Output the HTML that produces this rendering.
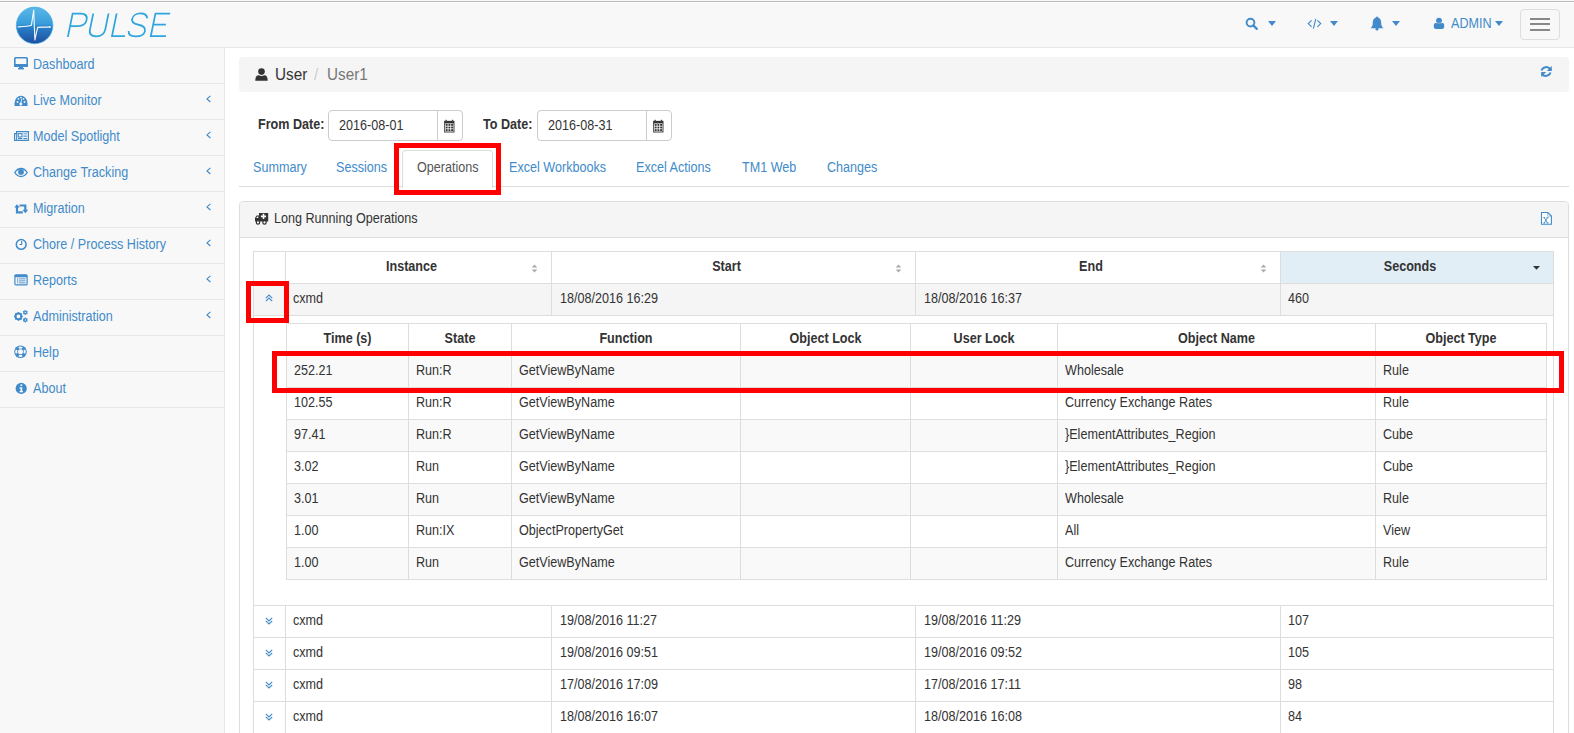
<!DOCTYPE html><html><head><meta charset="utf-8"><style>
html,body{margin:0;padding:0;width:1574px;height:733px;overflow:hidden;background:#fff;font-family:'Liberation Sans', sans-serif;}
.t{position:absolute;line-height:20px;white-space:nowrap;font-family:'Liberation Sans', sans-serif;transform:scaleY(1.1);transform-origin:0 14px;}
</style></head><body>
<div style="position:absolute;left:0px;top:0px;width:1574px;height:47px;background:#f8f8f8"></div>
<div style="position:absolute;left:0px;top:1px;width:1574px;height:1px;background:#bdbdbd"></div>
<div style="position:absolute;left:0px;top:2px;width:1574px;height:1px;background:#fcfcfc"></div>
<div style="position:absolute;left:0px;top:47px;width:1574px;height:1px;background:#e7e7e7"></div>
<svg style="position:absolute;left:14px;top:4px" width="42" height="42" viewBox="0 0 42 42">
<defs><linearGradient id="lg" x1="0" y1="0" x2="0" y2="1">
<stop offset="0" stop-color="#5ab8e8"/><stop offset="0.45" stop-color="#3a9edb"/><stop offset="0.55" stop-color="#2a7fc8"/><stop offset="1" stop-color="#1f4ea0"/></linearGradient></defs>
<circle cx="20.6" cy="21.4" r="18.3" fill="url(#lg)" stroke="#3fb0e6" stroke-width="0.7"/>
<path d="M3.7,22.9 C9,22.7 14.5,22.6 17.4,21.3 L19.7,6 L20.9,35.9 L23.6,23.4 C27,23.1 31,23.2 35.8,22.9" fill="none" stroke="#fff" stroke-width="1.1" stroke-linejoin="round" opacity="0.95"/><circle cx="35.9" cy="22.9" r="0.9" fill="#fff"/>
</svg>
<svg style="position:absolute;left:60px;top:5px" width="120" height="40" viewBox="0 0 120 40">
<g transform="matrix(1,0,-0.205,1,6.385,0) translate(-60,-5)" fill="none" stroke="#2ea5de" stroke-width="1.75" stroke-linecap="butt">
<path d="M68,37 V13.5 H76 C81,13.5 83.3,16.3 83.3,20 C83.3,23.7 81,26 76,26 H68"/>
<path d="M88.6,13.5 V29.5 C88.6,34 91.5,36.3 96.2,36.3 C101,36.3 103.9,34 103.9,29.5 V13.5"/>
<path d="M112,13.5 V36.2 H125"/>
<path d="M143.6,18.3 C142.5,15 139.5,13.4 135.7,13.4 C131.5,13.4 128.6,15.5 128.6,19 C128.6,22.5 131.5,23.8 135.7,24.6 C140.3,25.5 143.9,27 143.9,31 C143.9,34.5 140.5,36.4 135.7,36.4 C131,36.4 128,34.3 127.6,31"/>
<path d="M165.5,13.5 H150.8 V36.2 H166 M150.8,24.6 H163.5"/>
</g></svg>
<svg style="position:absolute;left:1245px;top:17px" width="14" height="14" viewBox="0 0 14 14"><circle cx="5.5" cy="5.6" r="3.9" fill="none" stroke="#428bca" stroke-width="1.9"/><path d="M8.3,8.4 L11.8,11.9" stroke="#428bca" stroke-width="2.2" stroke-linecap="round"/></svg>
<svg style="position:absolute;left:1268px;top:21px" width="8" height="5" viewBox="0 0 8 5"><path d="M0,0 H8 L4,5 Z" fill="#428bca"/></svg>
<svg style="position:absolute;left:1307px;top:18px" width="15" height="12" viewBox="0 0 15 12"><path d="M4.6,2.4 L1.3,5.6 L4.6,8.8 M10.4,2.4 L13.7,5.6 L10.4,8.8 M8.8,0.9 L6.4,10.6" fill="none" stroke="#428bca" stroke-width="1.15"/></svg>
<svg style="position:absolute;left:1330px;top:21px" width="8" height="5" viewBox="0 0 8 5"><path d="M0,0 H8 L4,5 Z" fill="#428bca"/></svg>
<svg style="position:absolute;left:1370px;top:16px" width="14" height="15" viewBox="0 0 14 15"><path d="M7,1.5 C3.8,1.5 2.8,4 2.8,7 C2.8,9.5 2,11 0.5,12.3 H13.5 C12,11 11.2,9.5 11.2,7 C11.2,4 10.2,1.5 7,1.5 Z" fill="#428bca"/><circle cx="7" cy="13" r="1.6" fill="#428bca"/><circle cx="7" cy="1.4" r="1" fill="#428bca"/></svg>
<svg style="position:absolute;left:1392px;top:21px" width="8" height="5" viewBox="0 0 8 5"><path d="M0,0 H8 L4,5 Z" fill="#428bca"/></svg>
<svg style="position:absolute;left:1433px;top:17px" width="12" height="13" viewBox="0 0 12 13"><circle cx="6" cy="3.6" r="2.9" fill="#428bca"/><rect x="0.8" y="6.1" width="10.4" height="5.8" rx="1.8" fill="#428bca"/><path d="M3.6,6.1 H8.4" stroke="#f8f8f8" stroke-width="0.6" opacity="0.6"/></svg>
<div class="t" style="left:1451px;top:14px;font-size:12.6px;color:#428bca;font-weight:normal;">ADMIN</div>
<svg style="position:absolute;left:1495px;top:21px" width="8" height="5" viewBox="0 0 8 5"><path d="M0,0 H8 L4,5 Z" fill="#428bca"/></svg>
<div style="position:absolute;left:1520px;top:9px;width:38px;height:29px;border:1px solid #ddd;border-radius:4px"></div>
<div style="position:absolute;left:1530px;top:18px;width:20px;height:2px;background:#888"></div>
<div style="position:absolute;left:1530px;top:23px;width:20px;height:2px;background:#888"></div>
<div style="position:absolute;left:1530px;top:29px;width:20px;height:2px;background:#888"></div>
<div style="position:absolute;left:0px;top:48px;width:224px;height:685px;background:#f8f8f8"></div>
<div style="position:absolute;left:224px;top:48px;width:1px;height:685px;background:#e7e7e7"></div>
<div style="position:absolute;left:0px;top:83px;width:224px;height:1px;background:#e7e7e7"></div>
<div class="t" style="left:33px;top:55px;font-size:12.6px;color:#428bca;font-weight:normal;">Dashboard</div>
<div style="position:absolute;left:0px;top:119px;width:224px;height:1px;background:#e7e7e7"></div>
<div class="t" style="left:33px;top:91px;font-size:12.6px;color:#428bca;font-weight:normal;">Live Monitor</div>
<svg style="position:absolute;left:205px;top:95px" width="7" height="8" viewBox="0 0 7 8"><path d="M5.4,0.8 L2,3.9 L5.4,7" fill="none" stroke="#428bca" stroke-width="1.15"/></svg>
<div style="position:absolute;left:0px;top:155px;width:224px;height:1px;background:#e7e7e7"></div>
<div class="t" style="left:33px;top:127px;font-size:12.6px;color:#428bca;font-weight:normal;">Model Spotlight</div>
<svg style="position:absolute;left:205px;top:131px" width="7" height="8" viewBox="0 0 7 8"><path d="M5.4,0.8 L2,3.9 L5.4,7" fill="none" stroke="#428bca" stroke-width="1.15"/></svg>
<div style="position:absolute;left:0px;top:191px;width:224px;height:1px;background:#e7e7e7"></div>
<div class="t" style="left:33px;top:163px;font-size:12.6px;color:#428bca;font-weight:normal;">Change Tracking</div>
<svg style="position:absolute;left:205px;top:167px" width="7" height="8" viewBox="0 0 7 8"><path d="M5.4,0.8 L2,3.9 L5.4,7" fill="none" stroke="#428bca" stroke-width="1.15"/></svg>
<div style="position:absolute;left:0px;top:227px;width:224px;height:1px;background:#e7e7e7"></div>
<div class="t" style="left:33px;top:199px;font-size:12.6px;color:#428bca;font-weight:normal;">Migration</div>
<svg style="position:absolute;left:205px;top:203px" width="7" height="8" viewBox="0 0 7 8"><path d="M5.4,0.8 L2,3.9 L5.4,7" fill="none" stroke="#428bca" stroke-width="1.15"/></svg>
<div style="position:absolute;left:0px;top:263px;width:224px;height:1px;background:#e7e7e7"></div>
<div class="t" style="left:33px;top:235px;font-size:12.6px;color:#428bca;font-weight:normal;">Chore / Process History</div>
<svg style="position:absolute;left:205px;top:239px" width="7" height="8" viewBox="0 0 7 8"><path d="M5.4,0.8 L2,3.9 L5.4,7" fill="none" stroke="#428bca" stroke-width="1.15"/></svg>
<div style="position:absolute;left:0px;top:299px;width:224px;height:1px;background:#e7e7e7"></div>
<div class="t" style="left:33px;top:271px;font-size:12.6px;color:#428bca;font-weight:normal;">Reports</div>
<svg style="position:absolute;left:205px;top:275px" width="7" height="8" viewBox="0 0 7 8"><path d="M5.4,0.8 L2,3.9 L5.4,7" fill="none" stroke="#428bca" stroke-width="1.15"/></svg>
<div style="position:absolute;left:0px;top:335px;width:224px;height:1px;background:#e7e7e7"></div>
<div class="t" style="left:33px;top:307px;font-size:12.6px;color:#428bca;font-weight:normal;">Administration</div>
<svg style="position:absolute;left:205px;top:311px" width="7" height="8" viewBox="0 0 7 8"><path d="M5.4,0.8 L2,3.9 L5.4,7" fill="none" stroke="#428bca" stroke-width="1.15"/></svg>
<div style="position:absolute;left:0px;top:371px;width:224px;height:1px;background:#e7e7e7"></div>
<div class="t" style="left:33px;top:343px;font-size:12.6px;color:#428bca;font-weight:normal;">Help</div>
<div style="position:absolute;left:0px;top:407px;width:224px;height:1px;background:#e7e7e7"></div>
<div class="t" style="left:33px;top:379px;font-size:12.6px;color:#428bca;font-weight:normal;">About</div>
<svg style="position:absolute;left:14px;top:57px" width="14" height="13" viewBox="0 0 14 13"><rect x="0.8" y="0.8" width="12.4" height="8.4" rx="0.8" fill="none" stroke="#428bca" stroke-width="1.6"/><rect x="0" y="7" width="14" height="2.8" fill="#428bca"/><rect x="5" y="9.5" width="4" height="1.8" fill="#428bca"/><rect x="4" y="11" width="6" height="1.4" fill="#428bca"/></svg>
<svg style="position:absolute;left:14px;top:95px" width="14" height="12" viewBox="0 0 14 12"><path d="M0.5,11 C0.2,4.5 3,0.8 7,0.8 C11,0.8 13.8,4.5 13.5,11 Z" fill="#428bca"/><g fill="#f8f8f8"><circle cx="3.5" cy="7" r="0.9"/><circle cx="4.5" cy="3.8" r="0.9"/><circle cx="7" cy="2.6" r="0.9"/><circle cx="9.5" cy="3.8" r="0.9"/><circle cx="10.5" cy="7" r="0.9"/><circle cx="6.8" cy="9" r="1.5"/></g><path d="M6.8,9 L7.6,4" stroke="#f8f8f8" stroke-width="0.8"/></svg>
<svg style="position:absolute;left:13px;top:130px" width="17" height="12" viewBox="0 0 17 12"><path d="M3.6,1.6 H15.4 V10.4 H1.6 V3.6 H3.6 Z" fill="none" stroke="#428bca" stroke-width="1.2"/><path d="M3.6,3 V10" stroke="#428bca" stroke-width="1"/><rect x="5.2" y="3.6" width="3.8" height="3.4" fill="none" stroke="#428bca" stroke-width="1.1"/><rect x="10.4" y="3.2" width="3.6" height="1.1" fill="#428bca" opacity="0.75"/><rect x="10.4" y="5.6" width="3.6" height="1.1" fill="#428bca"/><rect x="5" y="8" width="4.2" height="1.1" fill="#428bca"/><rect x="10.4" y="8" width="3.6" height="1.1" fill="#428bca"/></svg>
<svg style="position:absolute;left:14px;top:167px" width="14" height="11" viewBox="0 0 14 11"><path d="M0.8,5.5 C3,2 5,1.5 7,1.5 C9,1.5 11,2 13.2,5.5 C11,9 9,9.5 7,9.5 C5,9.5 3,9 0.8,5.5 Z" fill="none" stroke="#428bca" stroke-width="1.3"/><circle cx="7" cy="4.9" r="2.9" fill="#428bca"/></svg>
<svg style="position:absolute;left:14px;top:204px" width="15" height="10" viewBox="0 0 15 10"><path d="M0.2,3.6 L3,0.3 L5.8,3.6 Z" fill="#428bca"/><path d="M3,3 V8.4 H8.8" fill="none" stroke="#428bca" stroke-width="2.2"/><path d="M5.5,1.5 H11.3 V6.5" fill="none" stroke="#428bca" stroke-width="2.2"/><path d="M8.4,5.8 L11.3,9.2 L14.2,5.8 Z" fill="#428bca"/></svg>
<svg style="position:absolute;left:15px;top:238px" width="13" height="13" viewBox="0 0 13 13"><circle cx="6.2" cy="6.4" r="4.9" fill="none" stroke="#428bca" stroke-width="1.5"/><path d="M6.7,3 V6.5 H4.5" fill="none" stroke="#428bca" stroke-width="1.1"/></svg>
<svg style="position:absolute;left:14px;top:274px" width="14" height="12" viewBox="0 0 14 12"><rect x="0.9" y="0.9" width="12.2" height="10" rx="1" fill="none" stroke="#428bca" stroke-width="1.2"/><rect x="0.9" y="0.9" width="12.2" height="2.4" fill="#428bca"/><g fill="#428bca" opacity="0.8"><rect x="3.2" y="4.2" width="1" height="5.2"/><rect x="5" y="4.3" width="6.5" height="1.1"/><rect x="5" y="6.3" width="6.5" height="1.1"/><rect x="5" y="8.3" width="6.5" height="1.1"/></g></svg>
<svg style="position:absolute;left:13px;top:309px" width="16" height="15" viewBox="0 0 16 15"><g fill="#428bca"><rect x="4.65" y="3.1000000000000005" width="1.5" height="2.3" transform="rotate(0.0 5.4 7.4)"/><rect x="4.65" y="3.1000000000000005" width="1.5" height="2.3" transform="rotate(45.0 5.4 7.4)"/><rect x="4.65" y="3.1000000000000005" width="1.5" height="2.3" transform="rotate(90.0 5.4 7.4)"/><rect x="4.65" y="3.1000000000000005" width="1.5" height="2.3" transform="rotate(135.0 5.4 7.4)"/><rect x="4.65" y="3.1000000000000005" width="1.5" height="2.3" transform="rotate(180.0 5.4 7.4)"/><rect x="4.65" y="3.1000000000000005" width="1.5" height="2.3" transform="rotate(225.0 5.4 7.4)"/><rect x="4.65" y="3.1000000000000005" width="1.5" height="2.3" transform="rotate(270.0 5.4 7.4)"/><rect x="4.65" y="3.1000000000000005" width="1.5" height="2.3" transform="rotate(315.0 5.4 7.4)"/></g><circle cx="5.4" cy="7.4" r="3.0" fill="none" stroke="#428bca" stroke-width="1.8599999999999999"/><g fill="#428bca"><rect x="11.8" y="0.9999999999999999" width="1.0" height="1.9" transform="rotate(0.0 12.3 3.5)"/><rect x="11.8" y="0.9999999999999999" width="1.0" height="1.9" transform="rotate(60.0 12.3 3.5)"/><rect x="11.8" y="0.9999999999999999" width="1.0" height="1.9" transform="rotate(120.0 12.3 3.5)"/><rect x="11.8" y="0.9999999999999999" width="1.0" height="1.9" transform="rotate(180.0 12.3 3.5)"/><rect x="11.8" y="0.9999999999999999" width="1.0" height="1.9" transform="rotate(240.0 12.3 3.5)"/><rect x="11.8" y="0.9999999999999999" width="1.0" height="1.9" transform="rotate(300.0 12.3 3.5)"/></g><circle cx="12.3" cy="3.5" r="1.6" fill="none" stroke="#428bca" stroke-width="0.992"/><g fill="#428bca"><rect x="11.8" y="8.5" width="1.0" height="1.9" transform="rotate(0.0 12.3 11.0)"/><rect x="11.8" y="8.5" width="1.0" height="1.9" transform="rotate(60.0 12.3 11.0)"/><rect x="11.8" y="8.5" width="1.0" height="1.9" transform="rotate(120.0 12.3 11.0)"/><rect x="11.8" y="8.5" width="1.0" height="1.9" transform="rotate(180.0 12.3 11.0)"/><rect x="11.8" y="8.5" width="1.0" height="1.9" transform="rotate(240.0 12.3 11.0)"/><rect x="11.8" y="8.5" width="1.0" height="1.9" transform="rotate(300.0 12.3 11.0)"/></g><circle cx="12.3" cy="11.0" r="1.6" fill="none" stroke="#428bca" stroke-width="0.992"/></svg>
<svg style="position:absolute;left:14px;top:345px" width="14" height="14" viewBox="0 0 14 14"><circle cx="6.5" cy="6.7" r="6.3" fill="#428bca"/><path d="M11.25,4.58 A5.2,5.2 0 0 1 11.25,8.82 L9.51,8.04 A3.3,3.3 0 0 0 9.51,5.36 Z M8.62,11.45 A5.2,5.2 0 0 1 4.38,11.45 L5.16,9.71 A3.3,3.3 0 0 0 7.84,9.71 Z M1.75,8.82 A5.2,5.2 0 0 1 1.75,4.58 L3.49,5.36 A3.3,3.3 0 0 0 3.49,8.04 Z M4.38,1.95 A5.2,5.2 0 0 1 8.62,1.95 L7.84,3.69 A3.3,3.3 0 0 0 5.16,3.69 Z" fill="#f8f8f8"/><circle cx="6.5" cy="6.7" r="2.5" fill="#f8f8f8"/></svg>
<svg style="position:absolute;left:15px;top:382px" width="13" height="13" viewBox="0 0 13 13"><circle cx="6.2" cy="6.4" r="5.6" fill="#428bca"/><g fill="#f8f8f8"><rect x="5.5" y="2.4" width="1.7" height="1.6"/><path d="M4.6,5.2 H7.2 V9 H8 V10.2 H4.6 V9 H5.5 V6.4 H4.6 Z"/></g></svg>
<div style="position:absolute;left:239px;top:57px;width:1330px;height:35px;background:#f5f5f5;border-radius:4px"></div>
<svg style="position:absolute;left:255px;top:68px" width="13" height="13" viewBox="0 0 13 13"><circle cx="6.5" cy="3.6" r="3.3" fill="#333"/><path d="M0.3,12.8 C0.3,9 1.5,7.3 3.8,7.3 C5,8.2 8,8.2 9.2,7.3 C11.5,7.3 12.7,9 12.7,12.8 Z" fill="#333"/></svg>
<div class="t" style="left:275px;top:65px;font-size:15.3px;color:#333;font-weight:normal;transform:scaleY(1.05);transform-origin:0 15px">User</div>
<div class="t" style="left:314px;top:65px;font-size:15.3px;color:#ccc;font-weight:normal;transform:scaleY(1.05);transform-origin:0 15px">/</div>
<div class="t" style="left:327px;top:65px;font-size:15.3px;color:#777;font-weight:normal;transform:scaleY(1.05);transform-origin:0 15px">User1</div>
<svg style="position:absolute;left:1540px;top:65px" width="13" height="13" viewBox="0 0 13 13"><path d="M10.3,4.2 A5,5 0 0 0 1.5,5.5" fill="none" stroke="#428bca" stroke-width="2"/><path d="M11.8,1 V6 H6.8 Z" fill="#428bca"/><path d="M1.7,7.8 A5,5 0 0 0 10.5,6.5" fill="none" stroke="#428bca" stroke-width="2" transform="translate(0,1)"/><path d="M1.2,12 V7 H6.2 Z" fill="#428bca"/></svg>
<div class="t" style="left:258px;top:115px;font-size:12.6px;color:#333;font-weight:bold;">From Date:</div>
<div style="position:absolute;left:328px;top:110px;width:133px;height:29px;border:1px solid #ccc;border-radius:4px;background:#fff"></div>
<div style="position:absolute;left:437px;top:111px;width:1px;height:29px;background:#ccc"></div>
<div class="t" style="left:339px;top:116px;font-size:12.6px;color:#333;font-weight:normal;">2016-08-01</div>
<svg style="position:absolute;left:443px;top:119px" width="12" height="14" viewBox="0 0 12 14"><rect x="1.6" y="2.4" width="9.4" height="10.6" fill="#fff" stroke="#555" stroke-width="1.1"/><rect x="1.6" y="2" width="9.4" height="2.4" fill="#333"/><rect x="2.4" y="0.8" width="1.4" height="2" fill="#444"/><rect x="8.8" y="0.8" width="1.4" height="2" fill="#444"/><g fill="#333"><rect x="2.75" y="5.0" width="1.9" height="1.8"/><rect x="2.75" y="7.6" width="1.9" height="1.8"/><rect x="2.75" y="10.2" width="1.9" height="1.8"/><rect x="5.45" y="5.0" width="1.9" height="1.8"/><rect x="5.45" y="7.6" width="1.9" height="1.8"/><rect x="5.45" y="10.2" width="1.9" height="1.8"/><rect x="8.15" y="5.0" width="1.9" height="1.8"/><rect x="8.15" y="7.6" width="1.9" height="1.8"/><rect x="8.15" y="10.2" width="1.9" height="1.8"/></g></svg>
<div class="t" style="left:483px;top:115px;font-size:12.6px;color:#333;font-weight:bold;">To Date:</div>
<div style="position:absolute;left:537px;top:110px;width:133px;height:29px;border:1px solid #ccc;border-radius:4px;background:#fff"></div>
<div style="position:absolute;left:646px;top:111px;width:1px;height:29px;background:#ccc"></div>
<div class="t" style="left:548px;top:116px;font-size:12.6px;color:#333;font-weight:normal;">2016-08-31</div>
<svg style="position:absolute;left:652px;top:119px" width="12" height="14" viewBox="0 0 12 14"><rect x="1.6" y="2.4" width="9.4" height="10.6" fill="#fff" stroke="#555" stroke-width="1.1"/><rect x="1.6" y="2" width="9.4" height="2.4" fill="#333"/><rect x="2.4" y="0.8" width="1.4" height="2" fill="#444"/><rect x="8.8" y="0.8" width="1.4" height="2" fill="#444"/><g fill="#333"><rect x="2.75" y="5.0" width="1.9" height="1.8"/><rect x="2.75" y="7.6" width="1.9" height="1.8"/><rect x="2.75" y="10.2" width="1.9" height="1.8"/><rect x="5.45" y="5.0" width="1.9" height="1.8"/><rect x="5.45" y="7.6" width="1.9" height="1.8"/><rect x="5.45" y="10.2" width="1.9" height="1.8"/><rect x="8.15" y="5.0" width="1.9" height="1.8"/><rect x="8.15" y="7.6" width="1.9" height="1.8"/><rect x="8.15" y="10.2" width="1.9" height="1.8"/></g></svg>
<div style="position:absolute;left:239px;top:186px;width:1330px;height:1px;background:#ddd"></div>
<div style="position:absolute;left:402px;top:150px;width:89px;height:37px;background:#fff;border:1px solid #ddd;border-bottom:none;border-radius:4px 4px 0 0"></div>
<div class="t" style="left:253px;top:158px;font-size:12.6px;color:#428bca;font-weight:normal;">Summary</div>
<div class="t" style="left:336px;top:158px;font-size:12.6px;color:#428bca;font-weight:normal;">Sessions</div>
<div class="t" style="left:417px;top:158px;font-size:12.6px;color:#555;font-weight:normal;">Operations</div>
<div class="t" style="left:509px;top:158px;font-size:12.6px;color:#428bca;font-weight:normal;">Excel Workbooks</div>
<div class="t" style="left:636px;top:158px;font-size:12.6px;color:#428bca;font-weight:normal;">Excel Actions</div>
<div class="t" style="left:742px;top:158px;font-size:12.6px;color:#428bca;font-weight:normal;">TM1 Web</div>
<div class="t" style="left:827px;top:158px;font-size:12.6px;color:#428bca;font-weight:normal;">Changes</div>
<div style="position:absolute;left:239px;top:201px;width:1328px;height:600px;border:1px solid #ddd;border-radius:4px;background:#fff"></div>
<div style="position:absolute;left:240px;top:202px;width:1328px;height:35px;background:#f5f5f5;border-radius:3px 3px 0 0"></div>
<div style="position:absolute;left:240px;top:237px;width:1328px;height:1px;background:#ddd"></div>
<div class="t" style="left:274px;top:209px;font-size:12.6px;color:#333;font-weight:normal;">Long Running Operations</div>
<svg style="position:absolute;left:254px;top:211px" width="16" height="14" viewBox="0 0 16 14"><path d="M5,1.9 H14.2 V10.6 H1 V7 L2.6,4.4 H5 Z" fill="#333"/><path d="M2.2,7 L3.2,5.4 H4.3 V7 Z" fill="#f5f5f5"/><path d="M8.7,2.8 H10.3 V4.6 H12.1 V6.2 H10.3 V8 H8.7 V6.2 H6.9 V4.6 H8.7 Z" fill="#fff"/><circle cx="4" cy="11.4" r="1.7" fill="#f5f5f5" stroke="#333" stroke-width="1.2"/><circle cx="10.5" cy="11.4" r="1.7" fill="#f5f5f5" stroke="#333" stroke-width="1.2"/></svg>
<svg style="position:absolute;left:1540px;top:211px" width="13" height="15" viewBox="0 0 13 15"><path d="M1.5,1.5 H7.8 L11.4,5.1 V13.2 H1.5 Z" fill="#fff" stroke="#428bca" stroke-width="1.1"/><path d="M7.6,1.8 V5.2 H11.2" fill="none" stroke="#428bca" stroke-width="0.7" opacity="0.7"/><path d="M4.2,6.6 L7.6,12 M7.6,6.6 L4.2,12 M3.3,6.6 H5.2 M6.6,6.6 H8.5 M3.3,12 H5.2 M6.6,12 H8.5" stroke="#428bca" stroke-width="0.9" fill="none"/></svg>
<div style="position:absolute;left:1281px;top:252px;width:272px;height:31px;background:#e2eef6"></div>
<div style="position:absolute;left:254px;top:284px;width:1299px;height:31px;background:#f5f5f5"></div>
<div style="position:absolute;left:253px;top:251px;width:1301px;height:1px;background:#ddd"></div>
<div style="position:absolute;left:253px;top:283px;width:1301px;height:1px;background:#ddd"></div>
<div style="position:absolute;left:253px;top:315px;width:1301px;height:1px;background:#ddd"></div>
<div style="position:absolute;left:253px;top:605px;width:1301px;height:1px;background:#ddd"></div>
<div style="position:absolute;left:253px;top:637px;width:1301px;height:1px;background:#ddd"></div>
<div style="position:absolute;left:253px;top:669px;width:1301px;height:1px;background:#ddd"></div>
<div style="position:absolute;left:253px;top:701px;width:1301px;height:1px;background:#ddd"></div>
<div style="position:absolute;left:253px;top:251px;width:1px;height:65px;background:#ddd"></div>
<div style="position:absolute;left:285px;top:251px;width:1px;height:65px;background:#ddd"></div>
<div style="position:absolute;left:551px;top:251px;width:1px;height:65px;background:#ddd"></div>
<div style="position:absolute;left:915px;top:251px;width:1px;height:65px;background:#ddd"></div>
<div style="position:absolute;left:1280px;top:251px;width:1px;height:65px;background:#ddd"></div>
<div style="position:absolute;left:1553px;top:251px;width:1px;height:65px;background:#ddd"></div>
<div style="position:absolute;left:253px;top:316px;width:1px;height:289px;background:#ddd"></div>
<div style="position:absolute;left:1553px;top:316px;width:1px;height:289px;background:#ddd"></div>
<div style="position:absolute;left:253px;top:605px;width:1px;height:128px;background:#ddd"></div>
<div style="position:absolute;left:285px;top:605px;width:1px;height:128px;background:#ddd"></div>
<div style="position:absolute;left:551px;top:605px;width:1px;height:128px;background:#ddd"></div>
<div style="position:absolute;left:915px;top:605px;width:1px;height:128px;background:#ddd"></div>
<div style="position:absolute;left:1280px;top:605px;width:1px;height:128px;background:#ddd"></div>
<div style="position:absolute;left:1553px;top:605px;width:1px;height:128px;background:#ddd"></div>
<div class="t" style="left:293px;width:237px;text-align:center;top:257px;font-size:12.6px;color:#333;font-weight:bold">Instance</div>
<div class="t" style="left:559px;width:335px;text-align:center;top:257px;font-size:12.6px;color:#333;font-weight:bold">Start</div>
<div class="t" style="left:923px;width:336px;text-align:center;top:257px;font-size:12.6px;color:#333;font-weight:bold">End</div>
<div class="t" style="left:1288px;width:244px;text-align:center;top:257px;font-size:12.6px;color:#333;font-weight:bold">Seconds</div>
<svg style="position:absolute;left:531px;top:264px" width="7" height="10" viewBox="0 0 7 10"><path d="M0.7,3.5 L3.5,0.4 L6.3,3.5 Z M0.7,5.5 L3.5,8.6 L6.3,5.5 Z" fill="#aaa"/></svg>
<svg style="position:absolute;left:895px;top:264px" width="7" height="10" viewBox="0 0 7 10"><path d="M0.7,3.5 L3.5,0.4 L6.3,3.5 Z M0.7,5.5 L3.5,8.6 L6.3,5.5 Z" fill="#aaa"/></svg>
<svg style="position:absolute;left:1260px;top:264px" width="7" height="10" viewBox="0 0 7 10"><path d="M0.7,3.5 L3.5,0.4 L6.3,3.5 Z M0.7,5.5 L3.5,8.6 L6.3,5.5 Z" fill="#aaa"/></svg>
<svg style="position:absolute;left:1533px;top:266px" width="7" height="4" viewBox="0 0 7 4"><path d="M0,0 H7 L3.5,3.8 Z" fill="#333"/></svg>
<svg style="position:absolute;left:265px;top:294px" width="8" height="8" viewBox="0 0 8 8"><path d="M0.8,4.2 L4,1 L7.2,4.2 M0.8,7.2 L4,4 L7.2,7.2" fill="none" stroke="#428bca" stroke-width="1.1"/></svg>
<div class="t" style="left:293px;top:289px;font-size:12.6px;color:#333;font-weight:normal">cxmd</div>
<div class="t" style="left:560px;top:289px;font-size:12.6px;color:#333;font-weight:normal">18/08/2016 16:29</div>
<div class="t" style="left:924px;top:289px;font-size:12.6px;color:#333;font-weight:normal">18/08/2016 16:37</div>
<div class="t" style="left:1288px;top:289px;font-size:12.6px;color:#333;font-weight:normal">460</div>
<svg style="position:absolute;left:265px;top:617px" width="8" height="8" viewBox="0 0 8 8"><path d="M0.8,0.8 L4,4 L7.2,0.8 M0.8,3.8 L4,7 L7.2,3.8" fill="none" stroke="#428bca" stroke-width="1.1"/></svg>
<div class="t" style="left:293px;top:611px;font-size:12.6px;color:#333;font-weight:normal">cxmd</div>
<div class="t" style="left:560px;top:611px;font-size:12.6px;color:#333;font-weight:normal">19/08/2016 11:27</div>
<div class="t" style="left:924px;top:611px;font-size:12.6px;color:#333;font-weight:normal">19/08/2016 11:29</div>
<div class="t" style="left:1288px;top:611px;font-size:12.6px;color:#333;font-weight:normal">107</div>
<svg style="position:absolute;left:265px;top:649px" width="8" height="8" viewBox="0 0 8 8"><path d="M0.8,0.8 L4,4 L7.2,0.8 M0.8,3.8 L4,7 L7.2,3.8" fill="none" stroke="#428bca" stroke-width="1.1"/></svg>
<div class="t" style="left:293px;top:643px;font-size:12.6px;color:#333;font-weight:normal">cxmd</div>
<div class="t" style="left:560px;top:643px;font-size:12.6px;color:#333;font-weight:normal">19/08/2016 09:51</div>
<div class="t" style="left:924px;top:643px;font-size:12.6px;color:#333;font-weight:normal">19/08/2016 09:52</div>
<div class="t" style="left:1288px;top:643px;font-size:12.6px;color:#333;font-weight:normal">105</div>
<svg style="position:absolute;left:265px;top:681px" width="8" height="8" viewBox="0 0 8 8"><path d="M0.8,0.8 L4,4 L7.2,0.8 M0.8,3.8 L4,7 L7.2,3.8" fill="none" stroke="#428bca" stroke-width="1.1"/></svg>
<div class="t" style="left:293px;top:675px;font-size:12.6px;color:#333;font-weight:normal">cxmd</div>
<div class="t" style="left:560px;top:675px;font-size:12.6px;color:#333;font-weight:normal">17/08/2016 17:09</div>
<div class="t" style="left:924px;top:675px;font-size:12.6px;color:#333;font-weight:normal">17/08/2016 17:11</div>
<div class="t" style="left:1288px;top:675px;font-size:12.6px;color:#333;font-weight:normal">98</div>
<svg style="position:absolute;left:265px;top:713px" width="8" height="8" viewBox="0 0 8 8"><path d="M0.8,0.8 L4,4 L7.2,0.8 M0.8,3.8 L4,7 L7.2,3.8" fill="none" stroke="#428bca" stroke-width="1.1"/></svg>
<div class="t" style="left:293px;top:707px;font-size:12.6px;color:#333;font-weight:normal">cxmd</div>
<div class="t" style="left:560px;top:707px;font-size:12.6px;color:#333;font-weight:normal">18/08/2016 16:07</div>
<div class="t" style="left:924px;top:707px;font-size:12.6px;color:#333;font-weight:normal">18/08/2016 16:08</div>
<div class="t" style="left:1288px;top:707px;font-size:12.6px;color:#333;font-weight:normal">84</div>
<div style="position:absolute;left:287px;top:356px;width:1259px;height:31px;background:#f9f9f9"></div>
<div style="position:absolute;left:287px;top:420px;width:1259px;height:31px;background:#f9f9f9"></div>
<div style="position:absolute;left:287px;top:484px;width:1259px;height:31px;background:#f9f9f9"></div>
<div style="position:absolute;left:287px;top:548px;width:1259px;height:31px;background:#f9f9f9"></div>
<div style="position:absolute;left:286px;top:323px;width:1261px;height:1px;background:#ddd"></div>
<div style="position:absolute;left:286px;top:355px;width:1261px;height:1px;background:#ddd"></div>
<div style="position:absolute;left:286px;top:387px;width:1261px;height:1px;background:#ddd"></div>
<div style="position:absolute;left:286px;top:419px;width:1261px;height:1px;background:#ddd"></div>
<div style="position:absolute;left:286px;top:451px;width:1261px;height:1px;background:#ddd"></div>
<div style="position:absolute;left:286px;top:483px;width:1261px;height:1px;background:#ddd"></div>
<div style="position:absolute;left:286px;top:515px;width:1261px;height:1px;background:#ddd"></div>
<div style="position:absolute;left:286px;top:547px;width:1261px;height:1px;background:#ddd"></div>
<div style="position:absolute;left:286px;top:579px;width:1261px;height:1px;background:#ddd"></div>
<div style="position:absolute;left:286px;top:323px;width:1px;height:257px;background:#ddd"></div>
<div style="position:absolute;left:408px;top:323px;width:1px;height:257px;background:#ddd"></div>
<div style="position:absolute;left:511px;top:323px;width:1px;height:257px;background:#ddd"></div>
<div style="position:absolute;left:740px;top:323px;width:1px;height:257px;background:#ddd"></div>
<div style="position:absolute;left:910px;top:323px;width:1px;height:257px;background:#ddd"></div>
<div style="position:absolute;left:1057px;top:323px;width:1px;height:257px;background:#ddd"></div>
<div style="position:absolute;left:1375px;top:323px;width:1px;height:257px;background:#ddd"></div>
<div style="position:absolute;left:1546px;top:323px;width:1px;height:257px;background:#ddd"></div>
<div class="t" style="left:287px;width:121px;text-align:center;top:329px;font-size:12.6px;color:#333;font-weight:bold">Time (s)</div>
<div class="t" style="left:409px;width:102px;text-align:center;top:329px;font-size:12.6px;color:#333;font-weight:bold">State</div>
<div class="t" style="left:512px;width:228px;text-align:center;top:329px;font-size:12.6px;color:#333;font-weight:bold">Function</div>
<div class="t" style="left:741px;width:169px;text-align:center;top:329px;font-size:12.6px;color:#333;font-weight:bold">Object Lock</div>
<div class="t" style="left:911px;width:146px;text-align:center;top:329px;font-size:12.6px;color:#333;font-weight:bold">User Lock</div>
<div class="t" style="left:1058px;width:317px;text-align:center;top:329px;font-size:12.6px;color:#333;font-weight:bold">Object Name</div>
<div class="t" style="left:1376px;width:170px;text-align:center;top:329px;font-size:12.6px;color:#333;font-weight:bold">Object Type</div>
<div class="t" style="left:294px;top:361px;font-size:12.6px;color:#333;font-weight:normal">252.21</div>
<div class="t" style="left:416px;top:361px;font-size:12.6px;color:#333;font-weight:normal">Run:R</div>
<div class="t" style="left:519px;top:361px;font-size:12.6px;color:#333;font-weight:normal">GetViewByName</div>
<div class="t" style="left:1065px;top:361px;font-size:12.6px;color:#333;font-weight:normal">Wholesale</div>
<div class="t" style="left:1383px;top:361px;font-size:12.6px;color:#333;font-weight:normal">Rule</div>
<div class="t" style="left:294px;top:393px;font-size:12.6px;color:#333;font-weight:normal">102.55</div>
<div class="t" style="left:416px;top:393px;font-size:12.6px;color:#333;font-weight:normal">Run:R</div>
<div class="t" style="left:519px;top:393px;font-size:12.6px;color:#333;font-weight:normal">GetViewByName</div>
<div class="t" style="left:1065px;top:393px;font-size:12.6px;color:#333;font-weight:normal">Currency Exchange Rates</div>
<div class="t" style="left:1383px;top:393px;font-size:12.6px;color:#333;font-weight:normal">Rule</div>
<div class="t" style="left:294px;top:425px;font-size:12.6px;color:#333;font-weight:normal">97.41</div>
<div class="t" style="left:416px;top:425px;font-size:12.6px;color:#333;font-weight:normal">Run:R</div>
<div class="t" style="left:519px;top:425px;font-size:12.6px;color:#333;font-weight:normal">GetViewByName</div>
<div class="t" style="left:1065px;top:425px;font-size:12.6px;color:#333;font-weight:normal">}ElementAttributes_Region</div>
<div class="t" style="left:1383px;top:425px;font-size:12.6px;color:#333;font-weight:normal">Cube</div>
<div class="t" style="left:294px;top:457px;font-size:12.6px;color:#333;font-weight:normal">3.02</div>
<div class="t" style="left:416px;top:457px;font-size:12.6px;color:#333;font-weight:normal">Run</div>
<div class="t" style="left:519px;top:457px;font-size:12.6px;color:#333;font-weight:normal">GetViewByName</div>
<div class="t" style="left:1065px;top:457px;font-size:12.6px;color:#333;font-weight:normal">}ElementAttributes_Region</div>
<div class="t" style="left:1383px;top:457px;font-size:12.6px;color:#333;font-weight:normal">Cube</div>
<div class="t" style="left:294px;top:489px;font-size:12.6px;color:#333;font-weight:normal">3.01</div>
<div class="t" style="left:416px;top:489px;font-size:12.6px;color:#333;font-weight:normal">Run</div>
<div class="t" style="left:519px;top:489px;font-size:12.6px;color:#333;font-weight:normal">GetViewByName</div>
<div class="t" style="left:1065px;top:489px;font-size:12.6px;color:#333;font-weight:normal">Wholesale</div>
<div class="t" style="left:1383px;top:489px;font-size:12.6px;color:#333;font-weight:normal">Rule</div>
<div class="t" style="left:294px;top:521px;font-size:12.6px;color:#333;font-weight:normal">1.00</div>
<div class="t" style="left:416px;top:521px;font-size:12.6px;color:#333;font-weight:normal">Run:IX</div>
<div class="t" style="left:519px;top:521px;font-size:12.6px;color:#333;font-weight:normal">ObjectPropertyGet</div>
<div class="t" style="left:1065px;top:521px;font-size:12.6px;color:#333;font-weight:normal">All</div>
<div class="t" style="left:1383px;top:521px;font-size:12.6px;color:#333;font-weight:normal">View</div>
<div class="t" style="left:294px;top:553px;font-size:12.6px;color:#333;font-weight:normal">1.00</div>
<div class="t" style="left:416px;top:553px;font-size:12.6px;color:#333;font-weight:normal">Run</div>
<div class="t" style="left:519px;top:553px;font-size:12.6px;color:#333;font-weight:normal">GetViewByName</div>
<div class="t" style="left:1065px;top:553px;font-size:12.6px;color:#333;font-weight:normal">Currency Exchange Rates</div>
<div class="t" style="left:1383px;top:553px;font-size:12.6px;color:#333;font-weight:normal">Rule</div>
<div style="position:absolute;left:394px;top:143px;width:97px;height:42px;border:5px solid #ff0000"></div>
<div style="position:absolute;left:246px;top:281px;width:33px;height:32px;border:5px solid #ff0000"></div>
<div style="position:absolute;left:272px;top:351px;width:1282px;height:32px;border:5px solid #ff0000"></div>
</body></html>
